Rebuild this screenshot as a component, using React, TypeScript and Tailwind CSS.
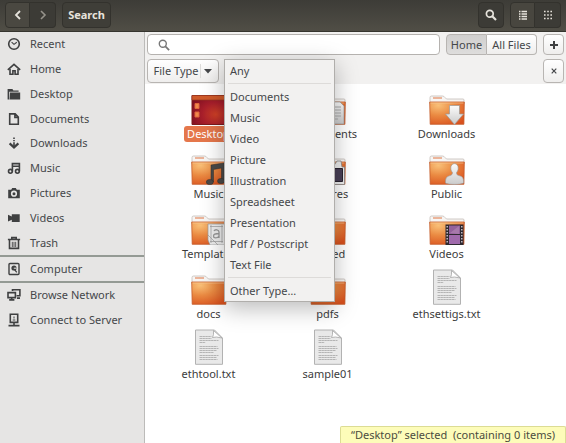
import { Fragment, type ReactNode } from "react";

type FileKind =
  | "desktop"
  | "documents"
  | "downloads"
  | "music"
  | "pictures"
  | "public"
  | "templates"
  | "folder"
  | "videos"
  | "text";

const files: { name: string; kind: FileKind; selected?: boolean }[] = [
  { name: "Desktop", kind: "desktop", selected: true },
  { name: "Documents", kind: "documents" },
  { name: "Downloads", kind: "downloads" },
  { name: "Music", kind: "music" },
  { name: "Pictures", kind: "pictures" },
  { name: "Public", kind: "public" },
  { name: "Templates", kind: "templates" },
  { name: "shared", kind: "folder" },
  { name: "Videos", kind: "videos" },
  { name: "docs", kind: "folder" },
  { name: "pdfs", kind: "folder" },
  { name: "ethsettigs.txt", kind: "text" },
  { name: "ethtool.txt", kind: "text" },
  { name: "sample01", kind: "text" },
];

const menuGroups = [
  ["Any"],
  [
    "Documents",
    "Music",
    "Video",
    "Picture",
    "Illustration",
    "Spreadsheet",
    "Presentation",
    "Pdf / Postscript",
    "Text File",
  ],
  ["Other Type…"],
];

function Glyph({ children }: { children: ReactNode }) {
  return (
    <svg
      viewBox="0 0 14 14"
      className="size-[14px] shrink-0"
      fill="none"
      stroke="#3f4041"
      strokeWidth="1.6"
      aria-hidden="true"
    >
      {children}
    </svg>
  );
}

const places: { name: string; icon: ReactNode }[] = [
  {
    name: "Recent",
    icon: (
      <>
        <circle cx="7" cy="7" r="5.3" />
        <path d="M4.6 5.2 7 7.4l2.8-2.2" strokeWidth="1.1" />
      </>
    ),
  },
  {
    name: "Home",
    icon: (
      <>
        <path d="M.8 7.8 7 2.3l6.2 5.500" />
        <path d="M3 7v5.200h2.900V8.800h2.200v3.400H11V7" />
      </>
    ),
  },
  {
    name: "Desktop",
    icon: (
      <>
        <path d="M.6 12.500V1.900h4.800l1 1.700h5.200v1.200H2.200V12.500z" fill="#3f4041" stroke="none" />
        <path d="M3 5.500h10.200v7H2.600z" fill="#3f4041" stroke="none" />
      </>
    ),
  },
  { name: "Documents", icon: <path d="M2.700 1.900h5.500l3.100 3.100v7.200H2.700zM7.900 2v3.400h3.300" /> },
  {
    name: "Downloads",
    icon: (
      <>
        <path d="M7 1.400v1.500M7 4v1.300M7 6.300v5" />
        <path d="m2.600 7.400 4.400 4 4.400-4" strokeWidth="2.200" />
      </>
    ),
  },
  {
    name: "Music",
    icon: (
      <>
        <path d="M5.400 10.500V2.600h7v7.700M5.400 5.200h7" />
        <circle cx="3.400" cy="10.300" r="1.900" />
        <circle cx="10.400" cy="10.300" r="1.900" />
      </>
    ),
  },
  {
    name: "Pictures",
    icon: (
      <>
        <path d="M1.200 3.700h3l1-1.700h3.600l1 1.700h3v8.600H1.200z" fill="#3f4041" stroke="none" />
        <circle cx="7" cy="7.700" r="2.300" stroke="#e6e5e4" />
      </>
    ),
  },
  {
    name: "Videos",
    icon: (
      <path
        d="M4.800 3.200h7.900v7.900H4.800V8.700L1 10.500V3.800l3.800 1.800z"
        fill="#3f4041"
        stroke="none"
      />
    ),
  },
  {
    name: "Trash",
    icon: (
      <>
        <path d="M.9 3.500h12.200M4.800 3V1.600h4.400V3M2.500 4v8.400h9V4" />
        <path d="M5.300 5.800V11M7 5.800V11M8.700 5.800V11" strokeWidth=".9" />
      </>
    ),
  },
];

const networkPlaces: { name: string; icon: ReactNode }[] = [
  {
    name: "Browse Network",
    icon: (
      <>
        <path d="M5.500 3V1.700h7.400v6H9.500" />
        <path d="M1 4.600h7.400v5H1zM2.200 11.900h5.200M4.700 10v2M10 10.100h3" />
      </>
    ),
  },
  {
    name: "Connect to Server",
    icon: (
      <>
        <path d="M3.300 1.200h7.400v8.200H3.300zM7 9.600v3M1.500 12.600h11" />
        <path d="M7 3.500v2M5.700 7h2.600" strokeWidth="1" />
      </>
    ),
  },
];

function Place({ name, icon }: { name: string; icon: ReactNode }) {
  return (
    <li className="flex">
      <a href="#" className="flex flex-1 items-center gap-[9px] pl-[7px]">
        <Glyph>{icon}</Glyph>
        {name}
      </a>
    </li>
  );
}

function Gradients() {
  return (
    <svg className="absolute size-0" aria-hidden="true">
      <defs>
        <radialGradient id="folder-front" cx=".25" cy=".15" r="1">
          <stop offset="0" stopColor="#f9c078" />
          <stop offset=".45" stopColor="#ea8a42" />
          <stop offset="1" stopColor="#d9501d" />
        </radialGradient>
        <radialGradient id="desktop-front" cx=".7" cy=".65" r=".8">
          <stop offset="0" stopColor="#cf4026" />
          <stop offset=".5" stopColor="#a91f2b" />
          <stop offset="1" stopColor="#7d1022" />
        </radialGradient>
        <linearGradient id="silver" x2="0" y2="1">
          <stop offset="0" stopColor="#fbfbfb" />
          <stop offset="1" stopColor="#cbcbcb" />
        </linearGradient>
      </defs>
    </svg>
  );
}

const emblems: Partial<Record<FileKind, ReactNode>> = {
  documents: (
    <>
      <path d="M18 7h12l4 4v18H18z" fill="url(#silver)" stroke="#999" strokeWidth=".7" />
      <path d="M20 12h11M20 15h11M20 18h11M20 21h11M20 24h8" stroke="#aaa" />
    </>
  ),
  downloads: (
    <path
      d="M20.500 10.500h10v8.500h4l-9 10.500-9-10.500h4z"
      fill="url(#silver)"
      stroke="#999"
      strokeWidth=".7"
    />
  ),
  music: (
    <g fill="#4b4a48" stroke="#302f2e" strokeWidth=".5">
      <path d="M20 10l13-2v19h-2.500V13l-8 1.500V27H20z" />
      <ellipse cx="18.800" cy="27" rx="3.500" ry="2.600" />
      <ellipse cx="30" cy="26" rx="3.500" ry="2.600" />
    </g>
  ),
  pictures: (
    <>
      <path d="M17 12h6l4-6h4l1 6h2.500v17.500H17z" fill="#eee" stroke="#888" strokeWidth=".8" />
      <path d="M19 13.500h13.500v13H19z" fill="#493f55" stroke="#28232f" />
    </>
  ),
  public: (
    <path
      d="M21.800 13c0-2.500 1.500-4.300 3.700-4.300s3.700 1.800 3.700 4.400c0 2-.9 3.500-1.700 4.500 0 1.600.3 2.400 2.500 3 3.300.8 4.500 2.300 4.500 5.500v2c-3 1.800-15 1.800-18 0v-2c0-3.200 1.500-4.700 4.500-5.500 1.800-.5 2.500-1.400 2.500-3-.8-1-1.700-2.600-1.700-4.600z"
      fill="url(#silver)"
      stroke="#999"
      strokeWidth=".6"
    />
  ),
  templates: (
    <g fill="none" stroke="#999" strokeWidth=".7">
      <path d="M17 9h17v21H19l-2-5z" fill="#ededed" />
      <path d="M19 11.500h13M19 26.500h13M20 10v18M31 10v18M17 20l10 10" />
      <path d="M23 16c1-2 5-1.500 5 1v6M28 18.500c-4 0-5.500 1-5.500 2.500 0 2.500 4 2.500 5.500 0" strokeWidth="1.300" />
    </g>
  ),
  videos: (
    <>
      <path d="M16.500 9.500h18V30h-18z" fill="#2e2930" />
      <path d="M20 10.500h11v8.500H20z" fill="#94619c" />
      <path d="M20 20h11v9H20z" fill="#a06aac" />
      <path d="M21 18l9-7v8z" fill="#b489b6" opacity=".6" />
      <path d="M18.200 11v18M32.800 11v18" stroke="#d8cdd8" strokeWidth="1.300" strokeDasharray="1.500 1.500" />
    </>
  ),
};

function FileIcon({ kind }: { kind: FileKind }) {
  if (kind === "text") {
    return (
      <svg viewBox="0 0 30 36" className="h-[36px] w-[30px]" aria-hidden="true">
        <path d="M1.500 1h19l8 8v26.300h-27z" fill="#e9e9e9" stroke="#b2b2b2" />
        <path d="M19.500 1.500v4l-1 3 4-.5 5.500 1z" fill="#fff" stroke="#a5a5a5" strokeWidth=".8" />
        <path
          d="M5.500 7.500h12M5.500 9.500h12M5.500 11.500h19M5.500 13.500h6M5.500 17.500h18M5.500 19.500h19M5.500 21.500h17M5.500 23.500h14M5.500 26.500h19M5.500 28.500h17M5.500 30.500h18"
          stroke="#b4b4b4"
          strokeDasharray="2.500 .4"
        />
      </svg>
    );
  }
  if (kind === "desktop") {
    return (
      <svg viewBox="0 0 36 30" className="h-[30px] w-[36px]" aria-hidden="true">
        <path d="M1 .5h34v29H1z" fill="url(#desktop-front)" stroke="#7a1b1c" />
        <path d="M1 .5h34V5H1z" fill="#cf5a2a" stroke="#99381f" strokeWidth=".7" />
        <path d="M4 8.500h4v5H4zM4 17h4v5H4z" fill="#f08a4c" stroke="#e0643c" />
      </svg>
    );
  }
  return (
    <svg viewBox="0 0 36 30" className="h-[30px] w-[36px]" aria-hidden="true">
      <path d="M1 8V2.500Q1 1 2.500 1h11Q15 1 16 2.500L17.500 4H34q1 0 1 1v4H1z" fill="#f7f5f3" stroke="#c4bcb7" strokeWidth=".8" />
      <path d="M4 3h9" stroke="#e69a74" strokeWidth="1.400" />
      <path d="M.7 7h34.600l-.4 22.300H1.200z" fill="url(#folder-front)" stroke="#c45a28" strokeWidth=".8" />
      <path d="M1.500 8h33" stroke="#fbcf9e" strokeWidth=".8" opacity=".8" />
      {emblems[kind]}
    </svg>
  );
}

const headerButton =
  "flex h-[26px] items-center justify-center border border-[#33322d] text-[#e6e3dc]";
const toolButton = "flex items-center justify-center border border-[#b8b5b2] bg-linear-to-b";
const raised = "from-white to-[#efeeed]";
const pressed = "from-[#d0cfce] to-[#dedddc]";

export default function App() {
  return (
    <div className="flex min-h-screen flex-col bg-white font-['Noto_Sans','Open_Sans',sans-serif] text-[11px] leading-[16px] text-[#45474a]">
      <Gradients />
      <header className="flex h-[32px] items-center justify-between border-b border-[#36352f] bg-linear-to-b from-[#3d3c37] to-[#504e46] px-[5px] pb-[2px]">
        <div className="flex gap-[6px]">
          <div className="flex">
            <button aria-label="Back" className={`${headerButton} w-[25px] rounded-l-[4px] bg-[#4a4841]`}>
              <svg viewBox="0 0 10 10" className="size-[10px]" fill="none" stroke="currentColor" strokeWidth="1.800">
                <path d="M7 1 3 5l4 4" />
              </svg>
            </button>
            <button aria-label="Forward" className={`${headerButton} w-[26px] rounded-r-[4px] border-l-0 bg-[#3c3b36]`}>
              <svg viewBox="0 0 10 10" className="size-[10px]" fill="none" stroke="#96938b" strokeWidth="1.600">
                <path d="m3 1 4 4-4 4" />
              </svg>
            </button>
          </div>
          <button className={`${headerButton} w-[49px] rounded-[4px] bg-[#3f3e38] font-bold`}>Search</button>
        </div>
        <div className="flex gap-[6px]">
          <button aria-label="Find files" className={`${headerButton} w-[26px] rounded-[4px] bg-[#3c3b36]`}>
            <svg viewBox="0 0 12 12" className="size-[12px]" fill="none" stroke="currentColor" strokeWidth="1.700">
              <circle cx="4.800" cy="4.800" r="3.400" />
              <path d="m7.300 7.300 3.700 3.700" strokeWidth="2.200" />
            </svg>
          </button>
          <div className="flex">
            <button aria-label="List view" className={`${headerButton} w-[25px] rounded-l-[4px] bg-[#48463f]`}>
              <svg viewBox="0 0 10 10" className="size-[10px]" stroke="currentColor" strokeWidth="1.400">
                <path d="M1 1.500h1.500M1 4h1.500M1 6.500h1.500M1 9h1.500M3.500 1.500H9M3.500 4H9M3.500 6.500H9M3.500 9H9" />
              </svg>
            </button>
            <button aria-label="Grid view" className={`${headerButton} w-[26px] rounded-r-[4px] border-l-0 bg-[#3c3b36]`}>
              <svg viewBox="0 0 10 10" className="size-[10px]" stroke="currentColor" strokeWidth="1.600">
                <path d="M1 1.500h8M1 5h8M1 8.500h8" strokeDasharray="1.600 1.600" />
              </svg>
            </button>
          </div>
        </div>
      </header>

      <div className="flex flex-1">
        <nav aria-label="Places" className="w-[145px] shrink-0 border-r border-[#bcbbb9] bg-[#e6e5e4]">
          <ul className="grid h-[223px] auto-rows-fr">
            {places.map((p) => (
              <Place key={p.name} {...p} />
            ))}
          </ul>
          <ul className="grid h-[28px] border-y-2 border-[#949a94]">
            <Place
              name="Computer"
              icon={
                <>
                  <rect x="2" y="1.500" width="10" height="11" rx="1" strokeWidth="1.400" />
                  <circle cx="7" cy="6" r="2.600" fill="#3f4041" stroke="none" />
                  <path d="M6.800 6.200h2.800" stroke="#e6e5e4" strokeWidth="1" />
                  <path d="m7.500 7.500 2.300 2.800" strokeWidth="1.200" />
                </>
              }
            />
          </ul>
          <ul className="grid h-[49px] auto-rows-fr">
            {networkPlaces.map((p) => (
              <Place key={p.name} {...p} />
            ))}
          </ul>
        </nav>

        <main className="relative min-w-0 flex-1">
          <div className="flex flex-col gap-[4px] bg-[#f2f1f0] px-[2px] pt-[2px] pb-[1px]">
            <div className="flex h-[21px] gap-[6px]">
              <label className="flex min-w-0 flex-1 items-center rounded-[4px] border border-[#b5b2af] bg-white pl-[10px]">
                <svg viewBox="0 0 12 12" className="size-[12px] shrink-0" fill="none" stroke="#777" strokeWidth="1.400">
                  <circle cx="4.800" cy="4.800" r="3.500" />
                  <path d="m7.400 7.400 3.700 3.700" strokeWidth="1.800" />
                </svg>
                <input aria-label="Search files" className="min-w-0 flex-1 px-2 outline-none" />
              </label>
              <div className="flex">
                <button aria-pressed="true" className={`${toolButton} ${pressed} w-[41px] rounded-l-[4px]`}>
                  Home
                </button>
                <button className={`${toolButton} ${raised} w-[50px] rounded-r-[4px] border-l-0`}>All Files</button>
              </div>
              <button aria-label="Add criterion" className={`${toolButton} ${raised} w-[21px] rounded-[4px]`}>
                <svg viewBox="0 0 10 10" className="size-[10px]" stroke="#3f4041" strokeWidth="2">
                  <path d="M5 1v8M1 5h8" />
                </svg>
              </button>
            </div>
            <div className="flex h-[24px] justify-between">
              <div className="relative flex">
                <button
                  aria-haspopup="menu"
                  aria-expanded="true"
                  className={`${toolButton} ${raised} w-[72px] gap-[2px] rounded-[4px]`}
                >
                  File Type
                  <svg viewBox="0 0 12 14" className="h-[14px] w-[12px]">
                    <path d="M.5 0v14" stroke="#dddcda" />
                    <path d="M4 5h8l-4 4.500z" fill="#45474a" />
                  </svg>
                </button>
                <div
                  role="menu"
                  className="absolute top-0 left-full z-10 ml-[5px] flex w-[111px] flex-col border border-[#b0aeab] bg-[#f2f1f0] shadow-[0_6px_22px_rgba(0,0,0,0.28)]"
                >
                  {menuGroups.map((group, i) => (
                    <Fragment key={group[0]}>
                      {i > 0 && <hr className="mx-[3px] my-[2px] border-[#dddbd9]" />}
                      {group.map((item) => (
                        <button key={item} role="menuitem" className="h-[21px] pl-[5px] text-left">
                          {item}
                        </button>
                      ))}
                    </Fragment>
                  ))}
                </div>
              </div>
              <button aria-label="Remove criterion" className={`${toolButton} ${raised} w-[21px] rounded-[4px]`}>
                <svg viewBox="0 0 6 6" className="size-[6px]" stroke="#45474a" strokeWidth="1.200">
                  <path d="m.7.7 4.600 4.600M5.300.7.7 5.300" />
                </svg>
              </button>
            </div>
          </div>

          <ul className="grid auto-rows-[60px] grid-cols-[repeat(auto-fill,119px)] pt-[5px] pl-[4px]">
            {files.map((f) => (
              <li key={f.name} className="flex flex-col items-center gap-px">
                <span className="flex h-[36px] items-end">
                  <FileIcon kind={f.kind} />
                </span>
                <span className={f.selected ? "rounded-[3px] bg-[#e5774b] px-[3px] text-white" : "text-[#3c3c3c]"}>
                  {f.name}
                </span>
              </li>
            ))}
          </ul>

          <p
            role="status"
            className="absolute right-0 bottom-0 rounded-t-[2px] border border-b-0 border-[#dcdc94] bg-[#fdfcb9] px-[10px] text-[#4c4c40]"
          >
            “Desktop” selected&nbsp; (containing 0 items)
          </p>
        </main>
      </div>
    </div>
  );
}
